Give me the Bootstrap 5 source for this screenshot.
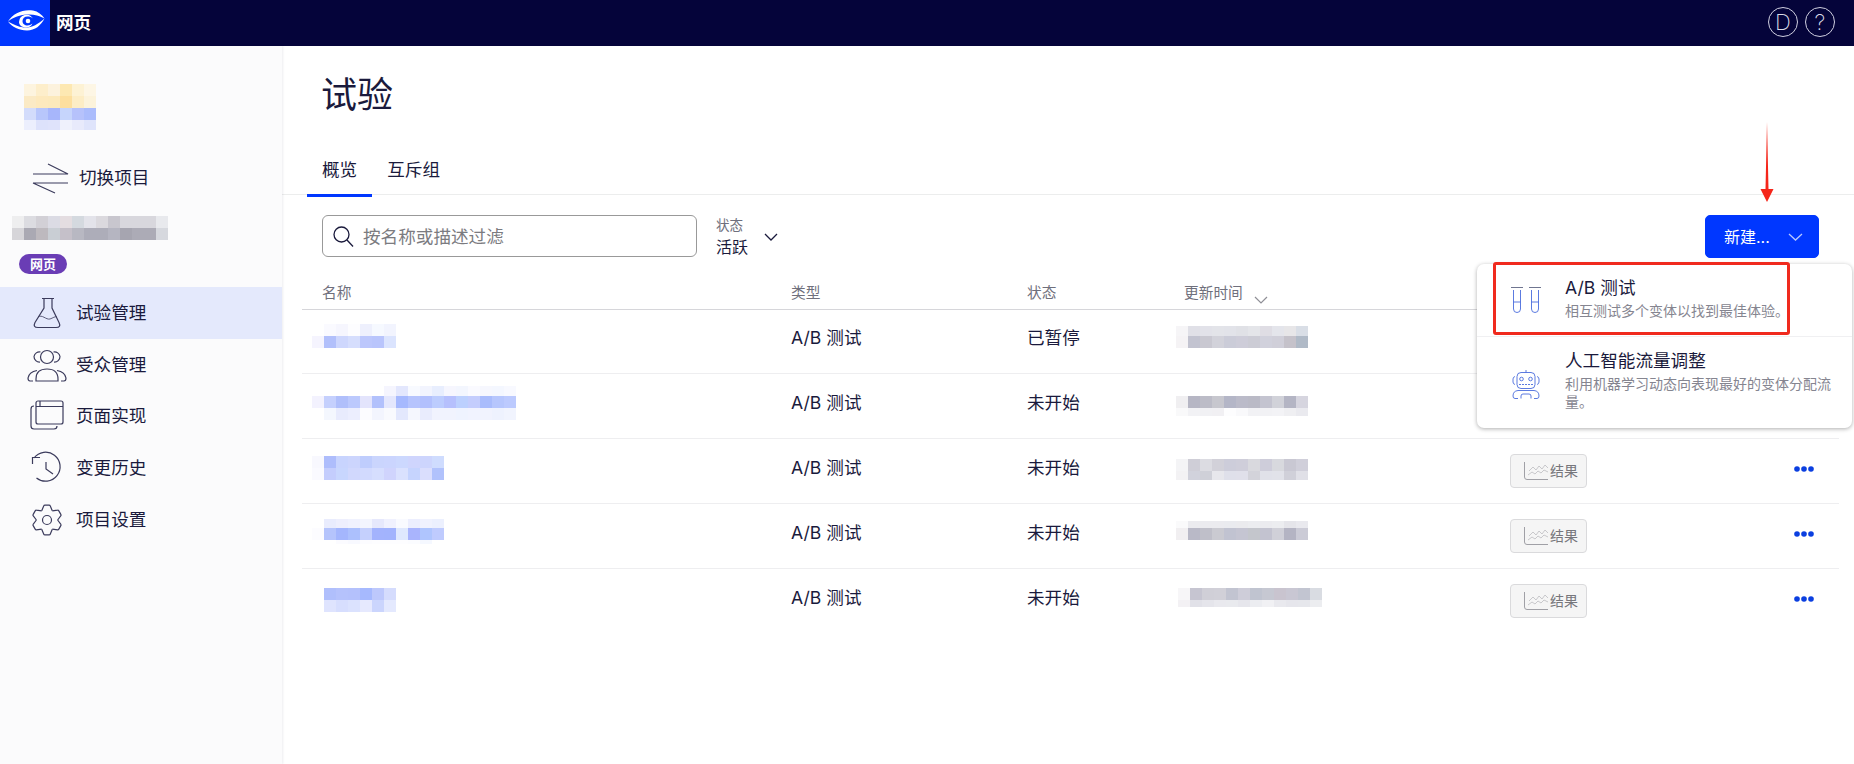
<!DOCTYPE html>
<html lang="zh-CN">
<head>
<meta charset="utf-8">
<title>试验</title>
<link href="https://cdn.jsdelivr.net/npm/bootstrap@5.3.0/dist/css/bootstrap.min.css" rel="stylesheet">
<style>
html,body{height:100%}
body{font-family:"Inter","Noto Sans CJK SC",sans-serif;color:#1a1a3c;font-size:17.6px;line-height:24px;overflow:hidden;background:#fff}
.topbar{height:46px;background:#05043a;color:#fff}
.brand-box{width:50px;height:46px;background:#0037ff}
.brand-name{font-size:17.6px;font-weight:700;margin-left:6px}
.top-circle{width:30px;height:30px;border:1px solid #cfcfe0;border-radius:50%;font-size:22px;font-weight:200;color:#dcdce8;line-height:1}
.top-circles{gap:7px;padding-right:19px;margin-bottom:3px}
.shell{height:718px}
.side{width:282px;background:#fbfbfc;box-shadow:1px 0 2px rgba(20,20,60,.08);flex-shrink:0;position:relative}
.mosaic{display:block;width:100%;height:60px;overflow:visible}
.mosaic-logo{height:112px}
.mosaic-proj{height:56px}
.switch-row{height:40px;padding-left:27px;gap:8px}
.type-pill{margin-left:19px;margin-bottom:13px;width:48px;height:20px;border-radius:10px;background:#6a3db5;color:#fff;font-size:13px;font-weight:700;line-height:20px;text-align:center}
.side-nav .nav-link{height:51.7px;padding:0 0 0 27px;gap:9px;color:#1a1a3c;display:flex;align-items:center}
.side-nav .nav-link.active{background:#e4e9fc}
.ico{stroke:#3b3b5c;stroke-width:1.2;fill:none;flex-shrink:0}
.content{min-width:0}
.page-title{height:100px;margin:0;padding:31px 0 0 39px;font-size:36px;line-height:36px;font-weight:400;color:#1a1a3c}
.exp-tabs{border-bottom:1px solid #eceded;padding-left:25px}
.exp-tabs .nav-link{padding:12px 15px;border-bottom:3px solid transparent;margin-bottom:-3px;color:#1a1a3c}
.exp-tabs .nav-link.active{border-bottom-color:#0037ff}
.toolbar{padding:20px 35px 0 40px;height:87px}
.search-wrap{width:375px;height:42px}
.search-wrap .form-control{height:42px;border:1px solid #999;border-radius:6px;padding:0 10px 0 40px;font-size:17.6px;color:#1a1a3c}
.search-wrap .form-control::placeholder{color:#7b7b80}
.search-ic{position:absolute;left:11px;top:11px}
.status-box{margin-left:19px;width:48px}
.status-label{font-size:13.5px;line-height:18px;color:#6f6f7c;margin-top:1px}
.status-val{font-size:16px;line-height:22px;margin-top:2px}
.status-chev{margin-top:18px}
.new-wrap{position:relative}
.new-btn{--bs-btn-bg:#0037ff;--bs-btn-border-color:#0037ff;--bs-btn-hover-bg:#0037ff;--bs-btn-color:#fff;width:114px;height:43px;border-radius:5px;font-size:16px;padding:0 15px 0 18px;display:flex;align-items:center;justify-content:space-between}
.new-menu{display:block;top:49px;right:-33px;left:auto;width:375px;padding:0;border:0;border-radius:7px;box-shadow:0 1px 4px rgba(0,0,0,.32);z-index:5}
.menu-row{display:flex;color:#1a1a3c}
.menu-row-a{height:73px;padding-top:13px;border-bottom:1px solid #f0f0f2}
.menu-row-b{height:91px;padding-top:13px}
.menu-ic{width:88px;padding-left:34px;flex-shrink:0}
.menu-ic-a{padding-top:10px}
.menu-ic-b{padding-top:20px}
.menu-title{font-size:17.6px;line-height:22px}
.menu-desc{font-size:14px;line-height:18px;margin-top:3px;width:272px;color:#858590}
.red-box{position:absolute;left:16px;top:-2px;width:297px;height:73px;border:3px solid #f02a1e;border-radius:3px;pointer-events:none}
.red-arrow{position:absolute;left:54px;top:-93px}
.exp-table{width:1537px;margin-left:20px;table-layout:fixed;border-collapse:separate;border-spacing:0}
.exp-table th{height:28px;font-weight:400;font-size:14.7px;line-height:20px;color:#6f6f7c;padding:1px 0 0 20px;border-bottom:1px solid #d6d6da;vertical-align:top}
.exp-table td{height:65px;padding:17px 0 0 20px;border-bottom:1px solid #eeeef0;vertical-align:top;font-size:17.6px;line-height:24px}
.exp-table tbody tr:first-child td{height:64px;padding-top:16px}
.exp-table tbody tr:last-child td{border-bottom:0}
.exp-table tbody td.blur-cell,.exp-table tbody tr:first-child td.blur-cell{padding:0}
.exp-table td.res-cell{padding-top:15px}
.exp-table tbody tr:first-child td.res-cell{padding-top:14px}
.exp-table td.more-cell{padding:27px 0 0 14px}
.exp-table tbody tr:first-child td.more-cell{padding-top:26px}
.more-dots{display:block}
.sort-chev{margin-left:11px;vertical-align:-6px}
.res-btn{display:flex;align-items:center;gap:2px;width:77px;height:34px;padding:0 0 0 13px;border:1px solid #dadadc;border-radius:4px;background:#f5f5f5;color:#77777c;font-size:14px}
</style>
</head>
<body>
<header class="topbar d-flex align-items-center justify-content-between">
  <div class="d-flex align-items-center">
    <div class="brand-box">
      <svg width="50" height="46" viewBox="0 0 50 46" fill="#fff">
        <path d="M8 21.500C13 13 23 9 33 10.500c5 1 9 4 11.500 8C39 15.500 33 14 27 14.500 19 15 13 17.500 8 21.500Z"/>
        <path d="M8 21.500C13 24 18 27 24 27.500c7 .5 14-3 20.500-9C41 25.500 35 30.500 27 30.500 19 30.500 12 27 8 21.500Z"/>
        <path d="M19 22a7.500 7.500 0 0 1 14-3.500c-1.500-1.500-3.500-2-5.500-2-3 0-5 2-5 4.500 0 2.800 2.200 4.500 5 4.500 1.800 0 3.500-.7 5-2-1.200 2.500-3.500 4-6.500 4-4 0-7-2.500-7-5.500Z"/>
        <circle cx="28" cy="21" r="2.300"/>
      </svg>
    </div>
    <div class="brand-name">网页</div>
  </div>
  <div class="top-circles d-flex align-items-center">
    <div class="top-circle d-flex align-items-center justify-content-center">D</div>
    <div class="top-circle d-flex align-items-center justify-content-center">?</div>
  </div>
</header>
<div class="shell d-flex">
  <aside class="side">
    <svg class="mosaic mosaic-logo" data-m="24,38,12,fdf4df fdeecb fcf2dd fde8b2 fdf2d4 fdf6e5|24,50,12,fbeac5 fde9bd fce9bb fddf9e fdedc5 fcf3db|24,62,12,d3dcfb b8c6fb a7b6fb c6d5fc b6c2fb abbcfc|24,74,10,eceffd dde2fb dfe3fb eff1fc e8eafb dfe4fb"></svg>
    <div class="switch-row d-flex align-items-center">
      <svg class="ico" width="44" height="36" viewBox="0 0 44 36"><path d="M21 4 41 14H6M6 23H41M6 23 28 33"/></svg>
      <span>切换项目</span>
    </div>
    <svg class="mosaic mosaic-proj" data-m="12,18,12,eeeeef dcdce1 d2d0d6 dbdbe4 e4dde1 d4d9df e3e3ea dbd9de c8c6ce d8d7dd d8d7dd d8d7dd e8e9ed|12,30,12,d6d5d9 aaa9b3 bdb9be c9ced4 c5c0c9 b8b8c2 adadb9 adadb9 b5b5c1 a6a5b0 acabb6 acabb6 d6d8de"></svg>
    <div class="type-pill">网页</div>
    <nav class="nav flex-column side-nav">
      <a class="nav-link active" href="#">
        <svg class="ico" width="40" height="36" viewBox="0 0 40 36"><path d="M15 3.500H27M17 3.500V13L8 27.500Q5.500 32.500 11 32.500H29Q34.500 32.500 32 27.500L25 13V3.500"/><path stroke-width=".8" d="M11 22C15 19 19 25 23 24 26 23 28 21 30 22"/></svg>
        <span>试验管理</span>
      </a>
      <a class="nav-link" href="#">
        <svg class="ico" width="40" height="36" viewBox="0 0 40 36"><circle cx="20" cy="10" r="6.500"/><path d="M9 34V32Q9 22 20 22 31 22 31 32V34ZM13.500 5A5.500 5.500 0 0 0 7 9.500 5.500 5.500 0 0 0 13 15M26.500 5A5.500 5.500 0 0 1 33 9.500 5.500 5.500 0 0 1 27 15M6 34H3Q1 34 1 31 2 25 10 23.500M34 34H37Q39 34 39 31 38 25 30 23.500"/></svg>
        <span>受众管理</span>
      </a>
      <a class="nav-link" href="#">
        <svg class="ico" width="40" height="36" viewBox="0 0 40 36"><rect x="9" y="3" width="27" height="23" rx="2"/><path d="M9 8.500H36M13 3V8.500M7 8Q4 8 4 11V28Q4 31 7 31H27Q30 31 30 28"/></svg>
        <span>页面实现</span>
      </a>
      <a class="nav-link" href="#">
        <svg class="ico" width="40" height="36" viewBox="0 0 40 36"><path d="M7 8A14.500 14.500 0 1 1 9.500 28M5.500 14V7.500H13M19 12V19L26 24"/></svg>
        <span>变更历史</span>
      </a>
      <a class="nav-link" href="#">
        <svg class="ico" width="40" height="36" viewBox="-20 -18 40 36">
          <defs><path id="tooth" d="M-5.300-9.180-3.200-14.200Q-3-14.800-2-14.800H2Q3-14.800 3.200-14.200L5.300-9.180"/></defs>
          <use href="#tooth"/><use href="#tooth" transform="rotate(60)"/><use href="#tooth" transform="rotate(120)"/><use href="#tooth" transform="rotate(180)"/><use href="#tooth" transform="rotate(240)"/><use href="#tooth" transform="rotate(300)"/>
          <circle r="4.500"/>
        </svg>
        <span>项目设置</span>
      </a>
    </nav>
  </aside>
  <main class="content flex-grow-1">
    <h1 class="page-title">试验</h1>
    <nav class="nav exp-tabs">
      <a class="nav-link active" href="#">概览</a>
      <a class="nav-link" href="#">互斥组</a>
    </nav>
    <div class="toolbar d-flex justify-content-between align-items-start">
      <div class="d-flex align-items-start">
        <div class="search-wrap position-relative">
          <svg class="search-ic" width="21" height="21" viewBox="0 0 21 21" fill="none" stroke="#1a1a3c" stroke-width="1.300"><circle cx="8.500" cy="8.500" r="7.500"/><path d="M14 14 20 20.500"/></svg>
          <input class="form-control" type="text" placeholder="按名称或描述过滤">
        </div>
        <div class="status-box">
          <div class="status-label">状态</div>
          <div class="status-val">活跃</div>
        </div>
        <svg class="status-chev" width="14" height="8" viewBox="0 0 14 8" fill="none" stroke="#1a1a3c" stroke-width="1.300"><path d="M1 1 7 7 13 1"/></svg>
      </div>
      <div class="new-wrap dropdown">
        <button class="btn new-btn" type="button"><span>新建...</span>
          <svg width="15" height="8" viewBox="0 0 15 8" fill="none" stroke="#b8c8ff" stroke-width="1.300"><path d="M1 1 7.500 7 14 1"/></svg>
        </button>
        <svg class="red-arrow" width="16" height="81" viewBox="0 0 16 81"><path fill="#f5261a" d="M8 0 9.500 67H14.500L8 80 1.500 67H6.500Z"/></svg>
        <div class="dropdown-menu show new-menu">
          <a class="menu-row menu-row-a text-decoration-none" href="#">
            <div class="menu-ic menu-ic-a">
              <svg width="30" height="27" viewBox="0 0 30 27" fill="none" stroke="#4a6cdc" stroke-width=".9"><path stroke="#6f7590" stroke-width="1" d="M0 .5H12M18 .5H30"/><path d="M2.500 3V22A3.500 3.500 0 0 0 9.500 22V3M2.500 15H9.500M20.500 3V22A3.500 3.500 0 0 0 27.500 22V3M20.500 15H27.500"/></svg>
            </div>
            <div>
              <div class="menu-title">A/B 测试</div>
              <div class="menu-desc">相互测试多个变体以找到最佳体验。</div>
            </div>
          </a>
          <a class="menu-row menu-row-b text-decoration-none" href="#">
            <div class="menu-ic menu-ic-b">
              <svg width="30" height="30" viewBox="0 0 30 30" fill="none" stroke="#4a6cdc" stroke-width=".9"><rect x="6" y="2.500" width="18" height="16" rx="4"/><path d="M15 0V2.500M4 6.500Q2 7 2 9V12Q2 14 4 14.500M26 6.500Q28 7 28 9V12Q28 14 26 14.500M7 20.500H23Q28 21 28 26 28 28.500 26 28.500H23M7 20.500Q2 21 2 26 2 28.500 4 28.500H7M10 28.500V26Q10 24 12 24H18Q20 24 20 26V28.500"/><path stroke-dasharray="2 1" d="M8 14.500H22"/><circle cx="10.500" cy="9" r="1.800"/><circle cx="19.500" cy="9" r="1.800"/></svg>
            </div>
            <div>
              <div class="menu-title">人工智能流量调整</div>
              <div class="menu-desc">利用机器学习动态向表现最好的变体分配流量。</div>
            </div>
          </a>
          <div class="red-box"></div>
        </div>
      </div>
    </div>
    <table class="exp-table">
      <colgroup><col style="width:469px"><col style="width:236px"><col style="width:157px"><col style="width:326px"><col style="width:290px"><col style="width:59px"></colgroup>
      <thead><tr>
        <th>名称</th><th>类型</th><th>状态</th>
        <th>更新时间<svg class="sort-chev" width="14" height="8" viewBox="0 0 14 8" fill="none" stroke="#8f8f96" stroke-width="1.200"><path d="M1 1 7 7 13 1"/></svg></th>
        <th></th><th></th>
      </tr></thead>
      <tbody>
        <tr>
          <td class="blur-cell"><svg class="mosaic" data-m="22,14,12,fafaff f6f6fe fdfdff eef0fd f6f9ff f2f4fe|10,26,12,f5f4fe b2c0fb ced7fd d6defd bcc7fc b9c5fc dbe4fe"></svg></td>
          <td>A/B 测试</td><td>已暂停</td>
          <td class="blur-cell"><svg class="mosaic" data-m="12,16,10,f6f5f7 e0e0e7 e2e2e9 e3e4e9 e2e3e9 e0e1e6 e4e5e9 dfdde4 e4e5eb e7e6e8 d9dee6|12,26,12,f5f3f5 c2c3d0 c9c8d1 d2d2da cbccd8 cecdd9 ccccd5 d1d1dc d0cfd9 c5c2ca b0bac7"></svg></td>
          <td class="res-cell"></td><td class="more-cell"></td>
        </tr>
        <tr>
          <td class="blur-cell"><svg class="mosaic" data-m="82,12,10,f5f5fe e3e7fd f8faff f2f4fe e8eefe f6f6fe f3f6fe fafaff f6f7fe f4f7ff f8f9ff|10,22,12,f3f2fe c5d0fd b0bffb bcc9fd e3e4fc b2c1fc e4e7fd a6b9fe b6c4fd b2c0fd bcccfe b6c0fd bcd0fe c4cdfd a9bcfc b6c6fd bccafe|22,34,12,f4f7fe e8ebfd eceefe fcfcff f3f5fe f9fafe e3e8fd f5f7fe e9ecfd f1f3fe f1f3fe eff3ff f1f3ff f1f3fe eef2fe f1f4fe"></svg></td>
          <td>A/B 测试</td><td>未开始</td>
          <td class="blur-cell"><svg class="mosaic" data-m="12,22,12,f0eff1 b6b6c4 bcbcc7 c7c7ce b4b6c7 bbbbc9 babac6 c4c4d0 d1d2d9 b4b5c4 d6d5df|12,34,8,f9f9fa f2f2f5 f1f1f4 f1f0f3 fdfdfe f9f9fb f2f2f5 f2f2f5 f3f3f6 efeff2 eaeaef"></svg></td>
          <td class="res-cell"></td><td class="more-cell"></td>
        </tr>
        <tr>
          <td class="blur-cell"><svg class="mosaic" data-m="10,17,12,f8f8fe aebdfc c8d4fe ccd5fd bfcdfd cad5fd cbd5fe ccd8fe cfd5fd cdd5fd cfdcfe|10,29,12,fafaff c4cdfd c8d6fe d1d8fd d2dafe d6defe d0d4fd dae1fe c6d4fe dadefd b1c2fc"></svg></td>
          <td>A/B 测试</td><td>未开始</td>
          <td class="blur-cell"><svg class="mosaic" data-m="12,20,12,f4f4f6 cfced7 dcdce2 d2d1d9 cdcdda cfceda d9d9de cecdda d8d9de c9c8d3 d0cfda|12,32,9,f3f2f4 d1d2dc cfd0d8 e7e7ec dfe0ea e0e0ea d3d3da e0e1e9 e1e2e9 d0d0d9 e0e0e7"></svg></td>
          <td class="res-cell"><button class="res-btn" type="button"><svg width="24" height="18" viewBox="0 0 24 18" fill="none"><path stroke="#a0a0a6" d="M.5 0V15Q.5 17.500 3 17.500H24"/><path stroke="#bcbcc0" stroke-width=".8" d="M5 9 9 5 12 8 15 4 18 7 21 3 24 6M4 13 8 10 11 12 14 9 17 11 20 8 24 10"/></svg><span>结果</span></button></td>
          <td class="more-cell"><svg class="more-dots" width="20" height="6" viewBox="0 0 20 6" fill="#0b3fe0"><circle cx="3" cy="3" r="2.800"/><circle cx="10" cy="3" r="2.800"/><circle cx="17" cy="3" r="2.800"/></svg></td>
        </tr>
        <tr>
          <td class="blur-cell"><svg class="mosaic" data-m="22,15,9,e9ecfd eeeffd f0f2fe f3f5fe e6e8fc f0f1fe f9faff eceefe f0f2fe ecf0fe|10,24,12,fcfcff b5c4fc a4b6fd acc0fd c5d0fd a3b3fd a2b3fd dfe8fe a9b4fd afc5fe bfcbfe|34,36,4,fbfbff f8f9ff fcfcff fdfdff fdfdff fdfdff fbfcff f5f8ff"></svg></td>
          <td>A/B 测试</td><td>未开始</td>
          <td class="blur-cell"><svg class="mosaic" data-m="12,17,7,fafafb ebebef ebebef ebebef eaebef ebebee ecedf0 ebebef ecedf0 e5e5ea e9e9ee|12,24,12,f1eff1 b9b9c7 bfbfc9 cacad1 c1c3d1 c5c5d2 c4c6cc c3c3d0 d0d0d8 b4b4c3 cbcbd6"></svg></td>
          <td class="res-cell"><button class="res-btn" type="button"><svg width="24" height="18" viewBox="0 0 24 18" fill="none"><path stroke="#a0a0a6" d="M.5 0V15Q.5 17.500 3 17.500H24"/><path stroke="#bcbcc0" stroke-width=".8" d="M5 9 9 5 12 8 15 4 18 7 21 3 24 6M4 13 8 10 11 12 14 9 17 11 20 8 24 10"/></svg><span>结果</span></button></td>
          <td class="more-cell"><svg class="more-dots" width="20" height="6" viewBox="0 0 20 6" fill="#0b3fe0"><circle cx="3" cy="3" r="2.800"/><circle cx="10" cy="3" r="2.800"/><circle cx="17" cy="3" r="2.800"/></svg></td>
        </tr>
        <tr>
          <td class="blur-cell"><svg class="mosaic" data-m="22,19,12,b0bffc b5c2fc b4c1fc a6b9fe bdc8fc d5dcfd|22,31,12,dfe4fe d7defe dbe2fe e6e9fe cbd5fd e4e9fe"></svg></td>
          <td>A/B 测试</td><td>未开始</td>
          <td class="blur-cell"><svg class="mosaic" data-m="14,19,12,f7f6f8 c6c5d1 d0cfd7 d1d0d8 c2c4d1 cecdd9 c0c4d0 c6c8d2 c9c4cf c9c7d3 c2c5d1 d9dce2|14,31,7,f3f1f4 e1e1e8 e5e5eb e9e9ee e9eaee e6e6ec ecedf1 f1f1f4 e9e9ee e6e6ec e6e7ec ecedf0"></svg></td>
          <td class="res-cell"><button class="res-btn" type="button"><svg width="24" height="18" viewBox="0 0 24 18" fill="none"><path stroke="#a0a0a6" d="M.5 0V15Q.5 17.500 3 17.500H24"/><path stroke="#bcbcc0" stroke-width=".8" d="M5 9 9 5 12 8 15 4 18 7 21 3 24 6M4 13 8 10 11 12 14 9 17 11 20 8 24 10"/></svg><span>结果</span></button></td>
          <td class="more-cell"><svg class="more-dots" width="20" height="6" viewBox="0 0 20 6" fill="#0b3fe0"><circle cx="3" cy="3" r="2.800"/><circle cx="10" cy="3" r="2.800"/><circle cx="17" cy="3" r="2.800"/></svg></td>
        </tr>
      </tbody>
    </table>
  </main>
</div>
<script src="https://cdn.jsdelivr.net/npm/bootstrap@5.3.0/dist/js/bootstrap.bundle.min.js"></script>
<script>
document.querySelectorAll('svg[data-m]').forEach(function(svg){
  var out='';
  svg.dataset.m.split('|').forEach(function(row){
    var p=row.split(','),x=+p[0],y=+p[1],h=+p[2];
    p[3].split(' ').forEach(function(c,i){
      out+='<rect x="'+(x+i*12)+'" y="'+y+'" width="12" height="'+h+'" fill="#'+c+'"/>';
    });
  });
  svg.innerHTML=out;
});
</script>
</body>
</html>
